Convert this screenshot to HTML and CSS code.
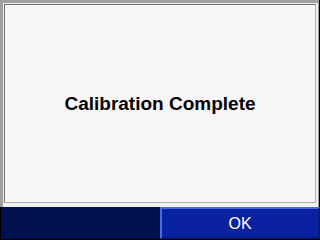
FILE: index.html
```html
<!DOCTYPE html>
<html>
<head>
<meta charset="utf-8">
<link rel="stylesheet" href="styles.css">
</head>
<body>
<div class="screen">
  <div class="frame">
    <div class="bevel">
      <div class="content">
        <span class="message">Calibration Complete</span>
      </div>
    </div>
  </div>
  <div class="bar">
    <div class="spacer"></div>
    <div class="ok">OK</div>
  </div>
</div>
</body>
</html>
```
FILE: styles.css
```css
html, body {
  margin: 0;
  padding: 0;
  background: #000;
}
.screen {
  width: 320px;
  height: 240px;
  display: flex;
  flex-direction: column;
  font-family: "Liberation Sans", Arial, sans-serif;
}
.frame {
  height: 207px;
  background: #a0a0a0;
  padding: 3px 1px 0 3px;
  box-sizing: border-box;
  border-right: 1px solid #000;
  display: flex;
}
.bevel {
  flex: 1;
  border-top: 1px solid #f0f0f0;
  border-left: 1px solid #f0f0f0;
  border-right: 2px solid #f0f0f0;
  border-bottom: 4px solid #f0f0f0;
  display: flex;
}
.content {
  flex: 1;
  background: #f8f6f8;
  border-top: 1px solid #707070;
  border-left: 1px solid #707070;
  border-right: 1px solid #b0b0b0;
  border-bottom: 1px solid #b0b0b0;
  display: flex;
  align-items: center;
  justify-content: center;
}
.message {
  font-weight: bold;
  font-size: 19px;
  color: #000;
  margin-top: 0;
}
.bar {
  flex: 1;
  display: flex;
  background: #00104e;
  border-left: 1px solid #000;
  border-bottom: 1px solid #000;
}
.spacer {
  flex: 1;
}
.ok {
  width: 160px;
  box-sizing: border-box;
  background: #0a22a0;
  border-top: 2px solid #4a68e8;
  border-left: 2px solid #4a68e8;
  border-right: 2px solid #061a70;
  border-bottom: 2px solid #061a70;
  color: #fff;
  font-size: 16px;
  display: flex;
  align-items: center;
  justify-content: center;
  padding-top: 2px;
}
```
